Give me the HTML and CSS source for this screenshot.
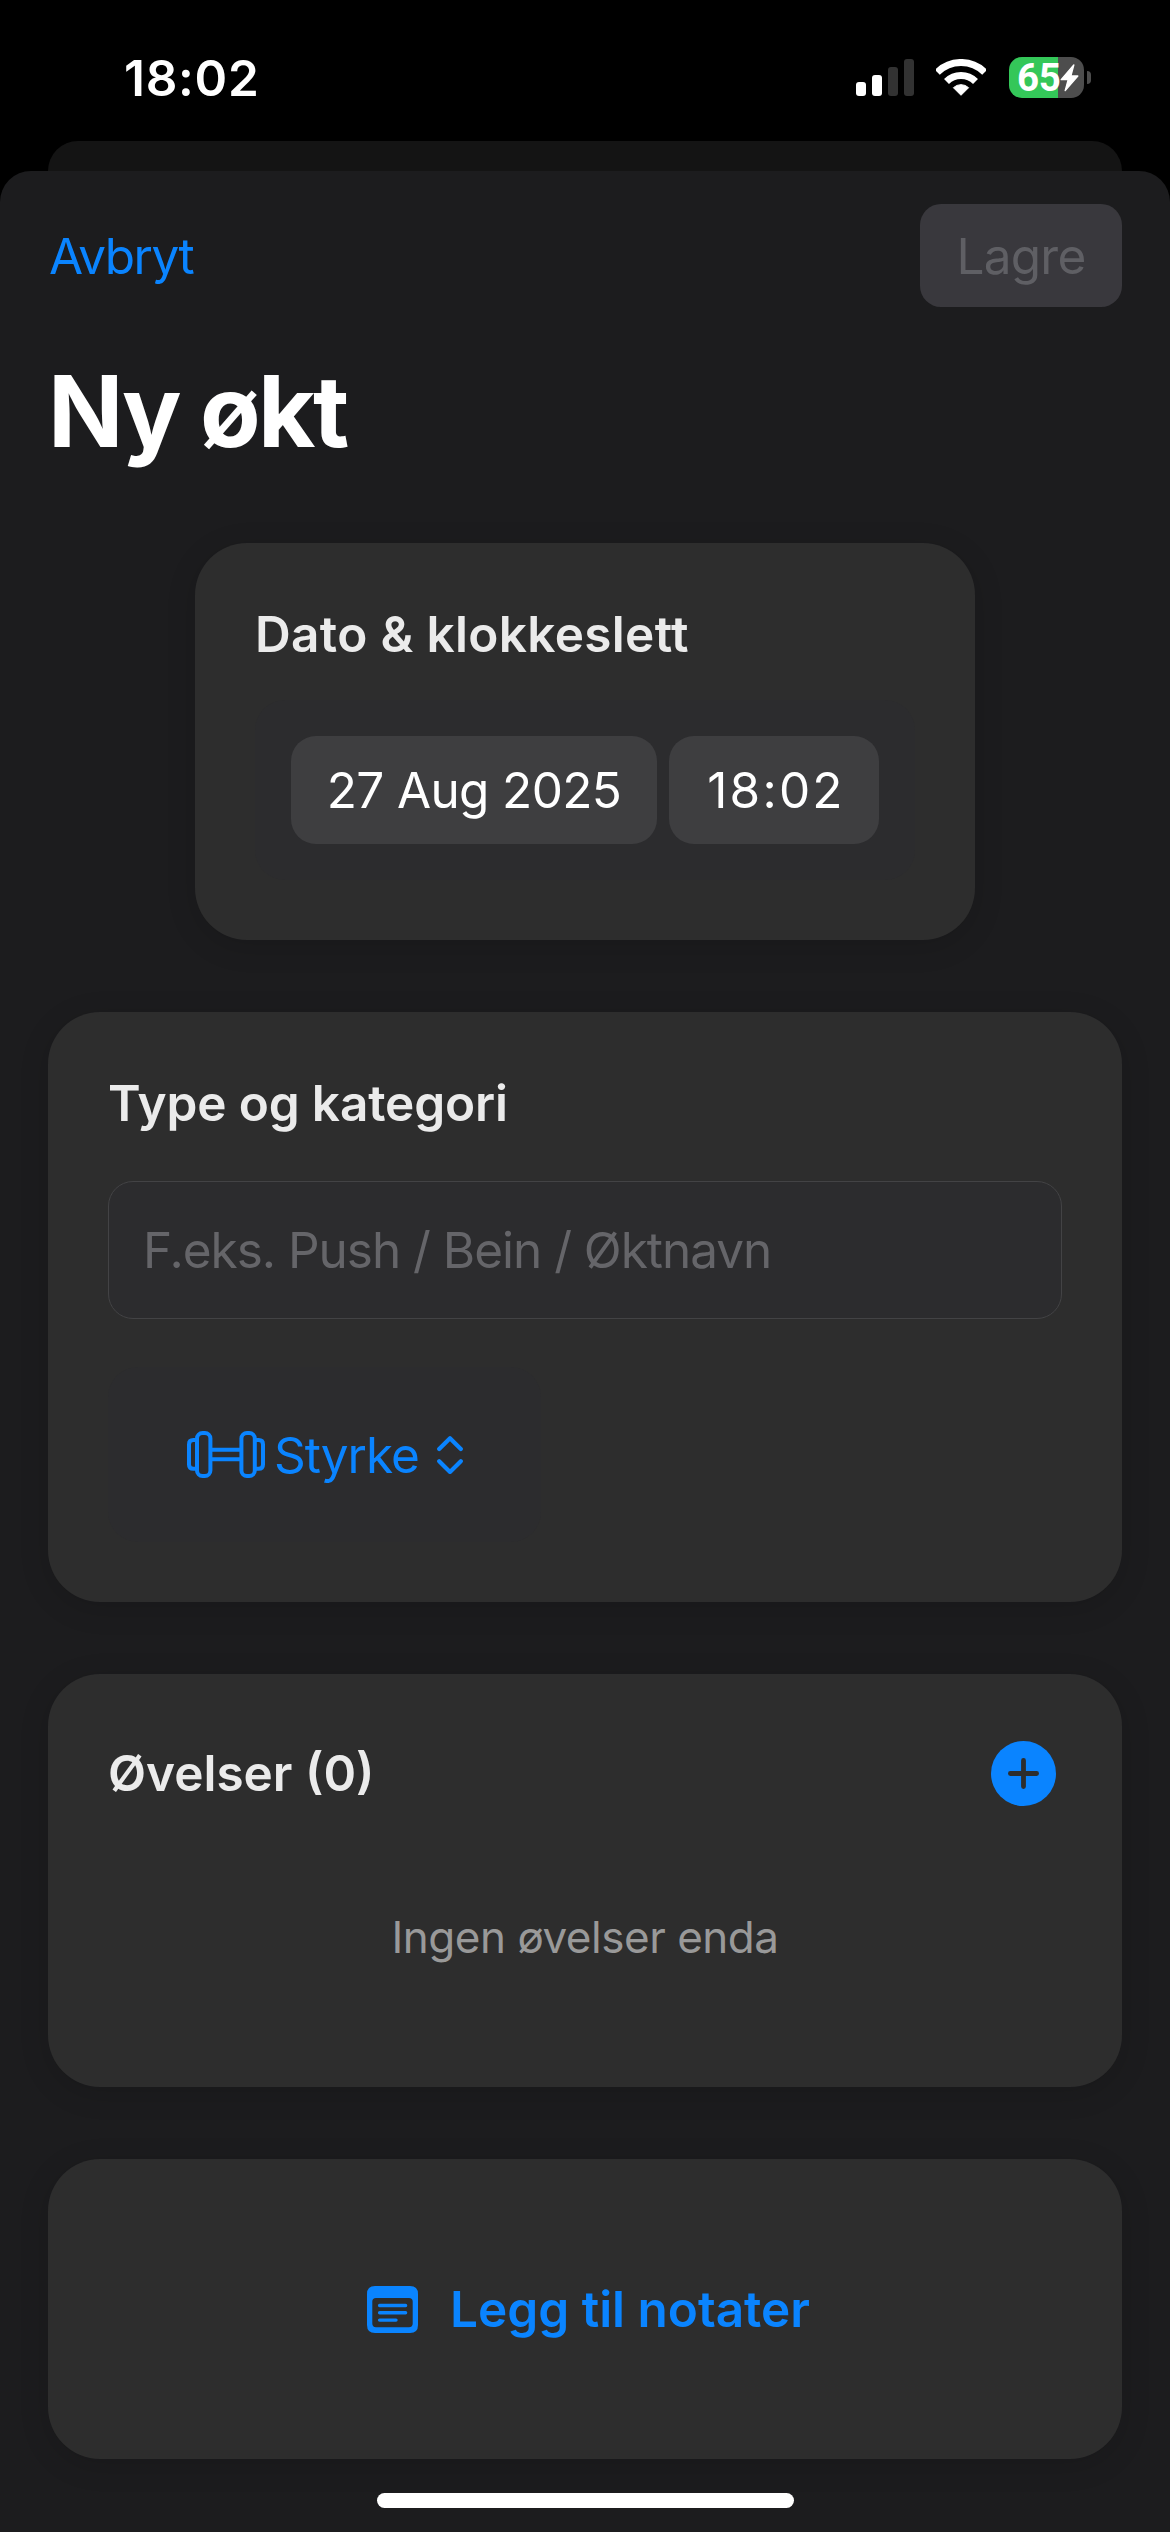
FILE: index.html
```html
<!DOCTYPE html>
<html lang="no">
<head>
<meta charset="utf-8">
<title>Ny økt</title>
<link rel="stylesheet" href="styles.css">
</head>
<body>
<div class="screen">
  <header class="status">
    <span class="clock">18:02</span>
    <div class="indicators">
      <div class="signal">
        <i class="bar bar-1"></i><i class="bar bar-2"></i><i class="bar bar-3 off"></i><i class="bar bar-4 off"></i>
      </div>
      <svg class="wifi" viewBox="0 0 50 37">
        <g fill="none" stroke="#fff" stroke-width="7">
          <path d="M1.3 13.3A33.5 33.5 0 0 1 48.7 13.3"/>
          <path d="M10.5 22.5A20.5 20.5 0 0 1 39.5 22.5"/>
        </g>
        <path d="M25 36.3L17.4 28.7A11 11 0 0 1 32.6 28.7Z" fill="#fff" stroke="#fff" stroke-width="1" stroke-linejoin="round"/>
      </svg>
      <div class="battery">
        <div class="cell">
          <span class="percent">65</span>
          <svg class="bolt" viewBox="0 0 19 28"><path d="M13.8 1L1.2 15.6H8.2L5.2 26.6L17.8 12H10.8Z" fill="#fff" stroke="#fff" stroke-width="1.4" stroke-linejoin="round"/></svg>
        </div>
        <i class="nub"></i>
      </div>
    </div>
  </header>
  <div class="back-sheet"></div>
  <main class="sheet">
    <nav class="toolbar">
      <a class="cancel">Avbryt</a>
      <button class="save" disabled>Lagre</button>
    </nav>
    <h1 class="title">Ny økt</h1>
    <div class="cards">
      <section class="card card-date">
        <h2 class="heading dato">Dato &amp; klokkeslett</h2>
        <div class="picker">
          <span class="pill pill-date">27 Aug 2025</span>
          <span class="pill pill-time">18:02</span>
        </div>
      </section>
      <section class="card">
        <h2 class="heading type">Type og kategori</h2>
        <div class="field">F.eks. Push / Bein / Øktnavn</div>
        <div class="category">
          <svg class="dumbbell" viewBox="0 0 78 47" fill="none" stroke="#0a84ff" stroke-width="4">
            <rect x="10" y="2" width="13.4" height="43" rx="5.5"/>
            <rect x="54.4" y="2" width="13.4" height="43" rx="5.5"/>
            <path d="M10 9H6.4Q2 9 2 13.4V33.4Q2 37.8 6.4 37.8H10M68 9H71.6Q76 9 76 13.4V33.4Q76 37.8 71.6 37.8H68M24 18.7H54M24 28.3H54"/>
          </svg>
          <span class="category-name">Styrke</span>
          <svg class="chevrons" viewBox="0 0 26 38" fill="none" stroke="#0a84ff" stroke-width="4.2" stroke-linecap="round" stroke-linejoin="round">
            <path d="M2.2 13L13 2.3L23.8 13M2.2 25.2L13 35.9L23.8 25.2"/>
          </svg>
        </div>
      </section>
      <section class="card">
        <div class="row">
          <h2 class="heading">Øvelser (0)</h2>
          <svg class="add" viewBox="0 0 65 65">
            <circle cx="32.5" cy="32.5" r="32.5" fill="#0a84ff"/>
            <path d="M19.4 32.5H45.6M32.5 19.4V45.6" stroke="#2d2d2d" stroke-width="4.8" stroke-linecap="round"/>
          </svg>
        </div>
        <p class="empty">Ingen øvelser enda</p>
      </section>
      <section class="card">
        <div class="notes">
          <svg class="note" viewBox="0 0 51 47">
            <path fill="#0a84ff" fill-rule="evenodd" d="M8 0H43Q51 0 51 8V39Q51 47 43 47H8Q0 47 0 39V8Q0 0 8 0ZM9 12Q5.3 12 5.3 15.6V37.6Q5.3 41.2 9 41.2H42Q45.7 41.2 45.7 37.6V15.6Q45.7 12 42 12Z"/>
            <path d="M12.6 19.5H38.6M12.6 26.8H38.6M12.6 34.1H29" stroke="#0a84ff" stroke-width="3.4" stroke-linecap="round"/>
          </svg>
          <span>Legg til notater</span>
        </div>
      </section>
    </div>
    <i class="home"></i>
  </main>
</div>
</body>
</html>
```
FILE: styles.css
```css
* { box-sizing: border-box; }
body {
  margin: 0;
  background: #000;
  color: #fff;
  font: 400 49.5px/62px "Inter", "Liberation Sans", sans-serif;
}
h1, h2, p { margin: 0; font: inherit; }

.screen {
  width: 1170px;
  height: 2532px;
  display: flex;
  flex-direction: column;
  overflow: hidden;
}

/* Status bar */
.status {
  height: 141px;
  padding: 47px 79px 0 124px;
  display: flex;
  justify-content: space-between;
  align-items: flex-start;
}
.clock { font-weight: 600; letter-spacing: .74px; }
.indicators { display: flex; align-items: flex-start; padding-top: 10px; }
.signal {
  display: flex;
  align-items: flex-end;
  gap: 6px;
  height: 39px;
}
.bar { width: 10px; border-radius: 3px; background: #fff; }
.bar-1 { height: 14px; }
.bar-2 { height: 21px; }
.bar-3 { height: 29px; }
.bar-4 { height: 37px; }
.off { background: #323232; }
.wifi { width: 50px; height: 37px; margin: 2px 23px 0 22px; }
.battery { display: flex; align-items: center; gap: 3px; }
.cell {
  width: 75px;
  height: 41px;
  padding-left: 8px;
  display: flex;
  align-items: center;
  border-radius: 13px;
  background: linear-gradient(90deg, #34c759 49px, #4d4d4d 49px);
}
.percent {
  width: 43px;
  font: 700 38.5px/41px "Roboto", "Liberation Sans", sans-serif;
  letter-spacing: -.3px;
}
.bolt { width: 19px; height: 28px; flex: none; }
.nub { width: 4px; height: 13px; border-radius: 0 6px 6px 0; background: #4d4d4d; }

/* Sheets */
.back-sheet {
  height: 30px;
  margin: 0 48px;
  border-radius: 30px 30px 0 0;
  background: #141414;
}
.sheet {
  flex: 1;
  display: flex;
  flex-direction: column;
  padding: 33px 48px 24px;
  border-radius: 31px 31px 0 0;
  background: #1c1c1e;
}
.toolbar {
  height: 103px;
  display: flex;
  justify-content: space-between;
  align-items: center;
}
.cancel { padding-left: 1px; color: #0a84ff; letter-spacing: -1.52px; }
.save {
  width: 202px;
  height: 103px;
  padding: 0;
  border: 0;
  border-radius: 21px;
  background: #39383d;
  color: #5f5f64;
  font: inherit;
  letter-spacing: -.74px;
}
.title {
  margin-top: 43px;
  font-size: 99px;
  font-weight: 700;
  line-height: 122px;
  letter-spacing: -2.53px;
}

/* Cards */
.cards {
  margin-top: 71px;
  display: flex;
  flex-direction: column;
  gap: 72px;
}
.card {
  padding: 60px;
  border-radius: 52px;
  background: #2d2d2d;
  box-shadow: 0 6px 30px rgba(0, 0, 0, .14);
}
.card-date { width: 780px; align-self: center; }
.heading { font-weight: 600; color: #ebebeb; }
.dato { letter-spacing: .34px; }
.type { letter-spacing: -.13px; }

.picker {
  height: 180px;
  margin-top: 35px;
  padding: 0 36px;
  display: flex;
  align-items: center;
  justify-content: space-between;
  border-radius: 30px;
  background: #2c2c2e;
}
.pill {
  height: 108px;
  line-height: 109px;
  border-radius: 25px;
  background: #3e3e40;
  text-align: center;
}
.pill-date { width: 366px; letter-spacing: -.64px; }
.pill-time { width: 210px; padding-left: 4px; letter-spacing: 2.19px; }

.field {
  height: 138px;
  margin-top: 47px;
  padding-left: 34px;
  border: 1.5px solid #434345;
  border-radius: 25px;
  background: #2c2c2e;
  color: #656569;
  line-height: 137px;
  letter-spacing: -1.02px;
}
.category {
  width: 433px;
  height: 175px;
  margin-top: 48px;
  padding-left: 79px;
  display: flex;
  align-items: center;
  border-radius: 30px;
  background: #2c2c2e;
  color: #0a84ff;
}
.dumbbell { width: 78px; height: 47px; margin-right: 9px; }
.category-name { width: 163px; letter-spacing: -1.04px; }
.chevrons { width: 26px; height: 38px; }

.row {
  height: 78px;
  display: flex;
  align-items: center;
  justify-content: space-between;
  padding-right: 6px;
}
.add { width: 65px; height: 65px; }
.empty {
  margin-top: 36px;
  font-size: 44px;
  line-height: 179px;
  text-align: center;
  color: #999;
  letter-spacing: -.47px;
}
.notes {
  height: 180px;
  padding-left: 7px;
  display: flex;
  align-items: center;
  justify-content: center;
  gap: 32px;
  color: #0a84ff;
  font-weight: 600;
}
.note { width: 51px; height: 47px; }

.home {
  width: 417px;
  height: 15px;
  margin: auto auto 0;
  border-radius: 8px;
  background: #fff;
}
```
